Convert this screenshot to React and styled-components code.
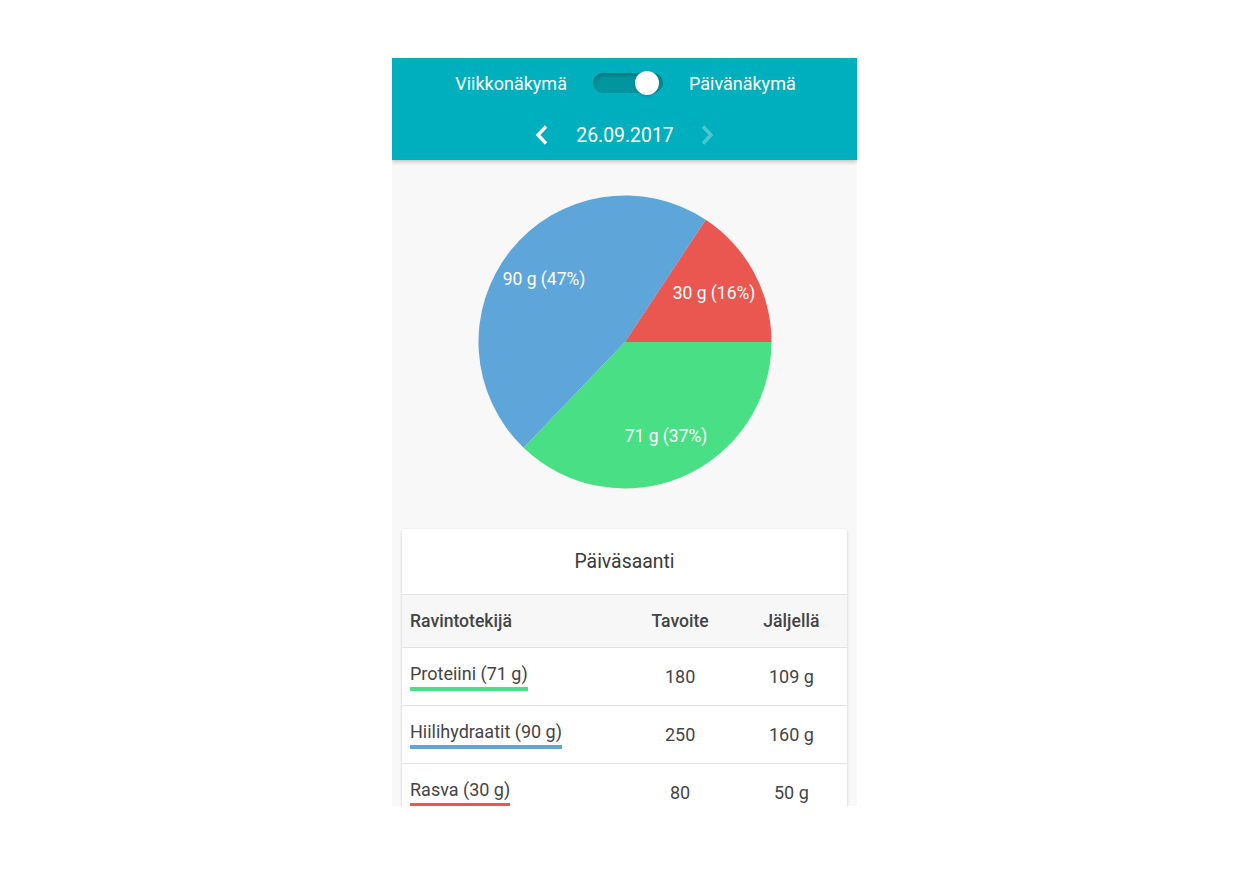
import styled, { createGlobalStyle } from "styled-components";

const GlobalStyle = createGlobalStyle`
  body {
    margin: 0;
    background: #fff;
    font-family: Roboto, "Liberation Sans", sans-serif;
  }
`;

const Phone = styled.div`
  width: 465px;
  height: 748px;
  margin: 58px 0 0 392px;
  background: #f8f8f8;
  overflow: hidden;
  display: flex;
  flex-direction: column;
`;

const Header = styled.header`
  flex: 0 0 102px;
  background: #00afbe;
  box-shadow: 0 2px 4px rgba(0, 0, 0, 0.22);
  display: flex;
  flex-direction: column;
  align-items: center;
  color: #fff;
  position: relative;
  z-index: 1;
`;

const ToggleRow = styled.div`
  height: 50px;
  display: flex;
  align-items: center;
  gap: 26px;
  font-size: 18px;
  padding-left: 2px;
`;

const Track = styled.div`
  width: 70px;
  height: 20px;
  border-radius: 10px;
  background: #00969f;
  box-shadow: inset 0 2px 4px rgba(0, 0, 0, 0.25);
  position: relative;
`;

const Thumb = styled.div`
  position: absolute;
  right: 4px;
  top: -2px;
  width: 24px;
  height: 24px;
  border-radius: 50%;
  background: #fff;
  box-shadow: 0 1px 2px rgba(0, 0, 0, 0.2);
`;

const DateRow = styled.div`
  height: 50px;
  display: flex;
  align-items: center;
  gap: 24px;
  font-size: 19.4px;
  padding: 2px 0 0 1px;
`;

const Chevron = styled.svg`
  width: 18px;
  height: 22px;
  opacity: ${(p) => (p.$disabled ? 0.3 : 1)};
`;

const ChartWrap = styled.div`
  display: flex;
  justify-content: center;
  padding: 35px 0 40px;
`;

const Card = styled.div`
  margin: 0 10px;
  background: #fff;
  border-radius: 2px;
  box-shadow: 0 1px 3px rgba(0, 0, 0, 0.14), 0 1px 2px rgba(0, 0, 0, 0.08);
`;

const CardTitle = styled.div`
  height: 65px;
  display: flex;
  align-items: center;
  justify-content: center;
  font-size: 19.4px;
  color: #3a3a3a;
  border-bottom: 1px solid #e2e2e2;
`;

const Row = styled.div`
  display: grid;
  grid-template-columns: 2fr 1fr 1fr;
  align-items: center;
  height: ${(p) => (p.$head ? "52px" : "57px")};
  background: ${(p) => (p.$head ? "#f7f7f7" : "#fff")};
  border-bottom: 1px solid #e2e2e2;
  color: #444;
  font-size: ${(p) => (p.$head ? "17.6px" : "18px")};
  font-weight: ${(p) => (p.$head ? 500 : 400)};
`;

const Cell = styled.div`
  text-align: ${(p) => (p.$left ? "left" : "center")};
  padding-left: ${(p) => (p.$left ? "8px" : "0")};
`;

const Nutrient = styled.span`
  display: inline-block;
  line-height: 20px;
  padding-bottom: 3px;
  border-bottom: 4px solid ${(p) => p.$color};
  margin-top: 1px;
`;

const GREEN = "#49df84";
const BLUE = "#5ea5da";
const RED = "#ea5650";

const slices = [
  { value: 71, color: GREEN, label: "71 g (37%)", lx: 665, ly: 435 },
  { value: 90, color: BLUE, label: "90 g (47%)", lx: 543, ly: 278 },
  { value: 30, color: RED, label: "30 g (16%)", lx: 713, ly: 292 },
];

const Pie = () => {
  const cx = 147;
  const cy = 147;
  const r = 146.5;
  const total = slices.reduce((s, x) => s + x.value, 0);
  let start = 0;
  return (
    <svg width="294" height="294" viewBox="0 0 294 294">
      {slices.map((s) => {
        const a0 = (start / total) * Math.PI * 2;
        start += s.value;
        const a1 = (start / total) * Math.PI * 2;
        const x0 = cx + r * Math.cos(a0);
        const y0 = cy + r * Math.sin(a0);
        const x1 = cx + r * Math.cos(a1);
        const y1 = cy + r * Math.sin(a1);
        const large = a1 - a0 > Math.PI ? 1 : 0;
        return (
          <path
            key={s.label}
            d={`M${cx} ${cy} L${x0} ${y0} A${r} ${r} 0 ${large} 1 ${x1} ${y1} Z`}
            fill={s.color}
          />
        );
      })}
      {slices.map((s) => (
        <text
          key={s.label + "t"}
          x={s.lx - 477}
          y={s.ly - 194 + 6}
          fill="#fff"
          fontSize="17.5"
          textAnchor="middle"
          fontFamily="Roboto, sans-serif"
        >
          {s.label}
        </text>
      ))}
    </svg>
  );
};

const rows = [
  { name: "Proteiini (71 g)", color: GREEN, goal: "180", left: "109 g" },
  { name: "Hiilihydraatit (90 g)", color: BLUE, goal: "250", left: "160 g" },
  { name: "Rasva (30 g)", color: RED, goal: "80", left: "50 g" },
];

const App = () => (
  <>
    <GlobalStyle />
    <Phone>
      <Header>
        <ToggleRow>
          <span>Viikkonäkymä</span>
          <Track>
            <Thumb />
          </Track>
          <span>Päivänäkymä</span>
        </ToggleRow>
        <DateRow>
          <Chevron viewBox="0 0 18 22">
            <path d="M12 2.5 L4 11 L12 19.5" fill="none" stroke="#fff" strokeWidth="3.4" />
          </Chevron>
          <span>26.09.2017</span>
          <Chevron viewBox="0 0 18 22" $disabled>
            <path d="M5 2.5 L13 11 L5 19.5" fill="none" stroke="#fff" strokeWidth="3.4" />
          </Chevron>
        </DateRow>
      </Header>
      <ChartWrap>
        <Pie />
      </ChartWrap>
      <Card>
        <CardTitle>Päiväsaanti</CardTitle>
        <Row $head>
          <Cell $left>Ravintotekijä</Cell>
          <Cell>Tavoite</Cell>
          <Cell>Jäljellä</Cell>
        </Row>
        {rows.map((r) => (
          <Row key={r.name}>
            <Cell $left>
              <Nutrient $color={r.color}>{r.name}</Nutrient>
            </Cell>
            <Cell>{r.goal}</Cell>
            <Cell>{r.left}</Cell>
          </Row>
        ))}
      </Card>
    </Phone>
  </>
);

export default App;
